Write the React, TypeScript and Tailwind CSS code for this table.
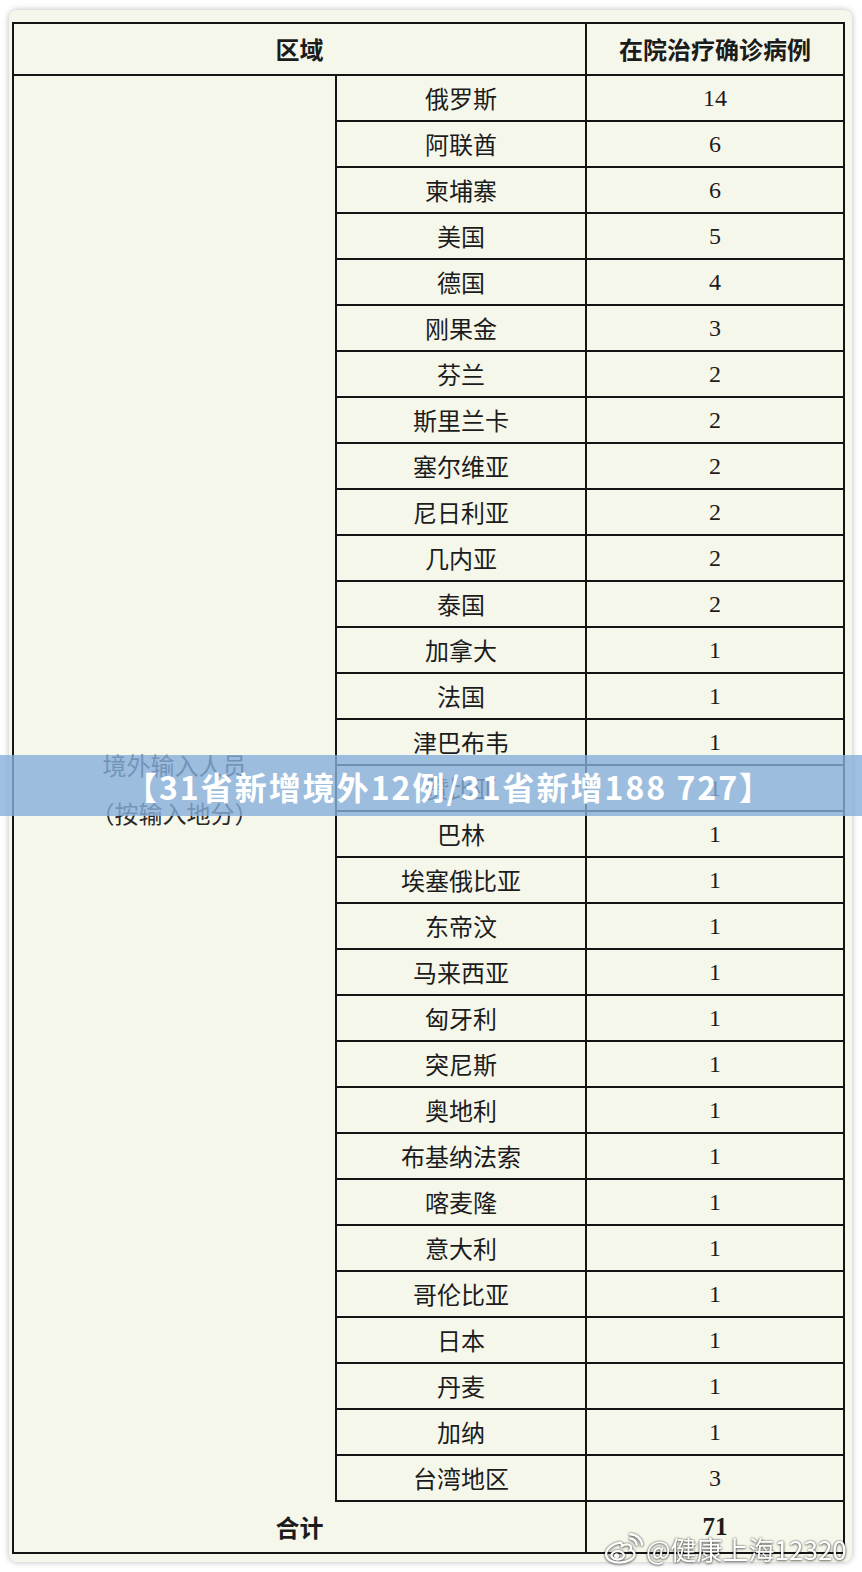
import React from 'react';

const rows: [string, number][] = [
    ['俄罗斯', 14],
    ['阿联酋', 6],
    ['柬埔寨', 6],
    ['美国', 5],
    ['德国', 4],
    ['刚果金', 3],
    ['芬兰', 2],
    ['斯里兰卡', 2],
    ['塞尔维亚', 2],
    ['尼日利亚', 2],
    ['几内亚', 2],
    ['泰国', 2],
    ['加拿大', 1],
    ['法国', 1],
    ['津巴布韦', 1],
    ['赞比亚', 1],
    ['巴林', 1],
    ['埃塞俄比亚', 1],
    ['东帝汶', 1],
    ['马来西亚', 1],
    ['匈牙利', 1],
    ['突尼斯', 1],
    ['奥地利', 1],
    ['布基纳法索', 1],
    ['喀麦隆', 1],
    ['意大利', 1],
    ['哥伦比亚', 1],
    ['日本', 1],
    ['丹麦', 1],
    ['加纳', 1],
    ['台湾地区', 3],
];

const cjk = "font-['Noto_Sans_CJK_SC',sans-serif]";
const num = "font-['Liberation_Serif','Noto_Sans_CJK_SC',serif]";

function WeiboLogo() {
    return (
        <svg width="40" height="32" viewBox="0 0 38 30" fill="none" stroke="#fff" strokeWidth="2.2" strokeLinecap="round">
            <path d="M15 9c-7 1-13 6-13 11 0 5 6 8 13 8s14-4 14-8c0-3-3-4-4-4 1-2 1-4-1-5-2-1-5 0-7 1 0-2-1-3-2-3z" />
            <ellipse cx="13" cy="21" rx="6" ry="4" />
            <circle cx="12" cy="21.5" r="1.3" fill="#fff" />
            <path d="M25 5c3 0 6 3 6 6" />
            <path d="M25 1c6 0 11 5 11 10" />
        </svg>
    );
}

export default function App() {
    return (
        <div className="relative w-[862px] h-[1572px] bg-white overflow-hidden">
            <div className="absolute left-[9px] top-[10px] w-[843px] h-[1552px] rounded-[8px] bg-[#f6f7eb] shadow-[0_0_6px_rgba(0,0,0,0.28)]" />

            <div className="relative pl-[12px] pt-[22px]">
                <div className="w-[833px] border-2 border-[#141414] bg-[#f6f7eb] text-[#1c1c1c]">
                    {/* header */}
                    <div className="flex h-[52px] border-b-2 border-[#141414]">
                        <div className={`w-[573px] border-r-2 border-[#141414] flex items-center justify-center text-[24px] font-bold ${cjk}`}>
                            区域
                        </div>
                        <div className={`flex-1 flex items-center justify-center text-[24px] font-bold ${cjk}`}>
                            在院治疗确诊病例
                        </div>
                    </div>

                    {/* body */}
                    <div className="flex">
                        <div className={`w-[323px] border-r-2 border-[#141414] flex flex-col items-center justify-center text-[24px] leading-[48px] text-[#2a2a2a] ${cjk}`}>
                            <span>境外输入人员</span>
                            <span>（按输入地分）</span>
                        </div>
                        <div className="flex-1 flex flex-col">
                            {rows.map(([name, count]) => (
                                <div key={name} className="flex h-[46px] border-b-2 border-[#141414]">
                                    <div className={`w-[250px] border-r-2 border-[#141414] flex items-center justify-center text-[24px] ${cjk}`}>
                                        {name}
                                    </div>
                                    <div className={`flex-1 flex items-center justify-center text-[24px] ${num}`}>
                                        {count}
                                    </div>
                                </div>
                            ))}
                        </div>
                    </div>

                    {/* total */}
                    <div className="flex h-[50px]">
                        <div className={`w-[573px] border-r-2 border-[#141414] flex items-center justify-center text-[24px] font-bold ${cjk}`}>
                            合计
                        </div>
                        <div className={`flex-1 flex items-start justify-center pt-[6px] text-[25px] font-bold ${num}`}>
                            71
                        </div>
                    </div>
                </div>
            </div>

            {/* title banner */}
            <div className="absolute left-0 top-[755px] w-[862px] h-[61px] bg-[#86aedb]/80 flex items-center justify-center pl-[36px]">
                <span className={`text-white text-[32px] font-bold tracking-[2px] ${cjk}`}>
                    【31省新增境外12例/31省新增188 727】
                </span>
            </div>

            {/* watermark */}
            <div className="absolute left-[604px] top-[1533px] flex items-end gap-[2px] [filter:drop-shadow(0_0_1px_rgba(0,0,0,0.6))_drop-shadow(0_1px_1px_rgba(0,0,0,0.35))]">
                <WeiboLogo />
                <span className={`text-white text-[26px] leading-[32px] ${cjk}`}>@健康上海12320</span>
            </div>
        </div>
    );
}
